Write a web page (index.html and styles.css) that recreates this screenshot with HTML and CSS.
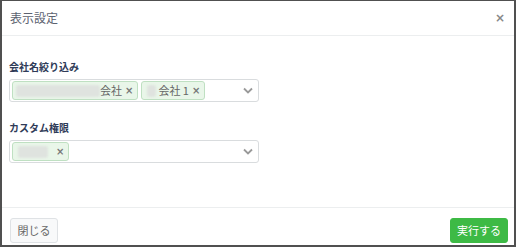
FILE: index.html
```html
<!DOCTYPE html>
<html lang="ja">
<head>
<meta charset="utf-8">
<link rel="stylesheet" href="styles.css">
</head>
<body>
<div class="modal">
  <div class="modal-header">
    <span class="modal-title">表示設定</span>
    <span class="close">×</span>
  </div>
  <div class="modal-body">
    <div class="field">
      <div class="label">会社名絞り込み</div>
      <div class="select">
        <div class="chips">
          <span class="chip"><span class="blur w85"></span><span class="chip-text">会社</span><span class="x">×</span></span>
          <span class="chip"><span class="blur w10"></span><span class="chip-text">会社 1</span><span class="x">×</span></span>
        </div>
        <svg class="chev" width="10" height="7" viewBox="0 0 10 7"><path d="M1 1.5 L5 5.5 L9 1.5" fill="none" stroke="#999" stroke-width="1.8"/></svg>
      </div>
    </div>
    <div class="field">
      <div class="label">カスタム権限</div>
      <div class="select">
        <div class="chips">
          <span class="chip"><span class="blur w28"></span><span class="x">×</span></span>
        </div>
        <svg class="chev" width="10" height="7" viewBox="0 0 10 7"><path d="M1 1.5 L5 5.5 L9 1.5" fill="none" stroke="#999" stroke-width="1.8"/></svg>
      </div>
    </div>
  </div>
  <div class="modal-footer">
    <button class="btn btn-light">閉じる</button>
    <button class="btn btn-success">実行する</button>
  </div>
</div>
</body>
</html>
```
FILE: styles.css
```css
html, body { margin: 0; padding: 0; background: #fff; }
body {
  font-family: "Noto Sans CJK JP", "Noto Sans", sans-serif;
  color: #555;
}
.modal {
  box-sizing: border-box;
  width: 516px;
  height: 247px;
  border: 2px solid #505050;
  border-top-width: 1px;
  display: flex;
  flex-direction: column;
  background: #fff;
}
.modal-header {
  height: 34px;
  border-bottom: 1px solid #eceeef;
  display: flex;
  align-items: center;
  justify-content: space-between;
  padding: 0 9px 0 8px;
}
.modal-title {
  font-size: 12px;
  color: #5c6270;
  line-height: 1;
}
.close {
  font-size: 12px;
  font-weight: bold;
  color: #888;
  line-height: 1;
  font-family: "DejaVu Sans", sans-serif;
}
.modal-body {
  flex: 1;
  padding: 24px 7px 0 7px;
  display: flex;
  flex-direction: column;
  gap: 19px;
}
.label {
  font-size: 10px;
  font-weight: bold;
  color: #2f3b58;
  line-height: 14px;
  margin-bottom: 5px;
}
.select {
  box-sizing: border-box;
  width: 250px;
  height: 23px;
  border: 1px solid #d9dcde;
  border-radius: 3px;
  display: flex;
  align-items: center;
  justify-content: space-between;
  padding: 0 5px 0 2px;
}
.chips { display: flex; gap: 3px; }
.chip {
  box-sizing: border-box;
  height: 19px;
  display: inline-flex;
  align-items: center;
  background: #e9f6e9;
  border: 1px solid #bfe0c2;
  border-radius: 3px;
  padding: 0 4px 0 3px;
  font-size: 11px;
  color: #666;
  white-space: nowrap;
}
.blur {
  display: inline-block;
  height: 12px;
  border-radius: 3px;
  background: #dfe3df;
  filter: blur(1.2px);
}
.w85 { width: 84px; }
.w10 { width: 9px; margin: 0 2px 0 2px; }
.w28 { width: 30px; margin: 0 5px 0 2px; }
.chip-text { line-height: 1; }
.x {
  font-family: "DejaVu Sans", sans-serif;
  font-weight: bold;
  font-size: 10px;
  color: #777;
  margin-left: 3px;
  line-height: 1;
}
.modal-footer {
  box-sizing: border-box;
  height: 38px;
  border-top: 1px solid #eceeef;
  display: flex;
  align-items: flex-start;
  justify-content: space-between;
  padding: 10px 6px 0 8px;
}
.btn {
  box-sizing: border-box;
  height: 25px;
  border-radius: 3px;
  font-family: "Noto Sans CJK JP", "Noto Sans", sans-serif;
  font-size: 11px;
  padding: 0;
  line-height: 1;
  white-space: nowrap;
  text-align: center;
}
.btn-light {
  background: #f8f9fa;
  border: 1px solid #dfe2e5;
  color: #666;
  width: 48px;
}
.btn-success {
  background: #3dba45;
  border: 1px solid #3dba45;
  color: #fff;
  width: 58px;
}
```
